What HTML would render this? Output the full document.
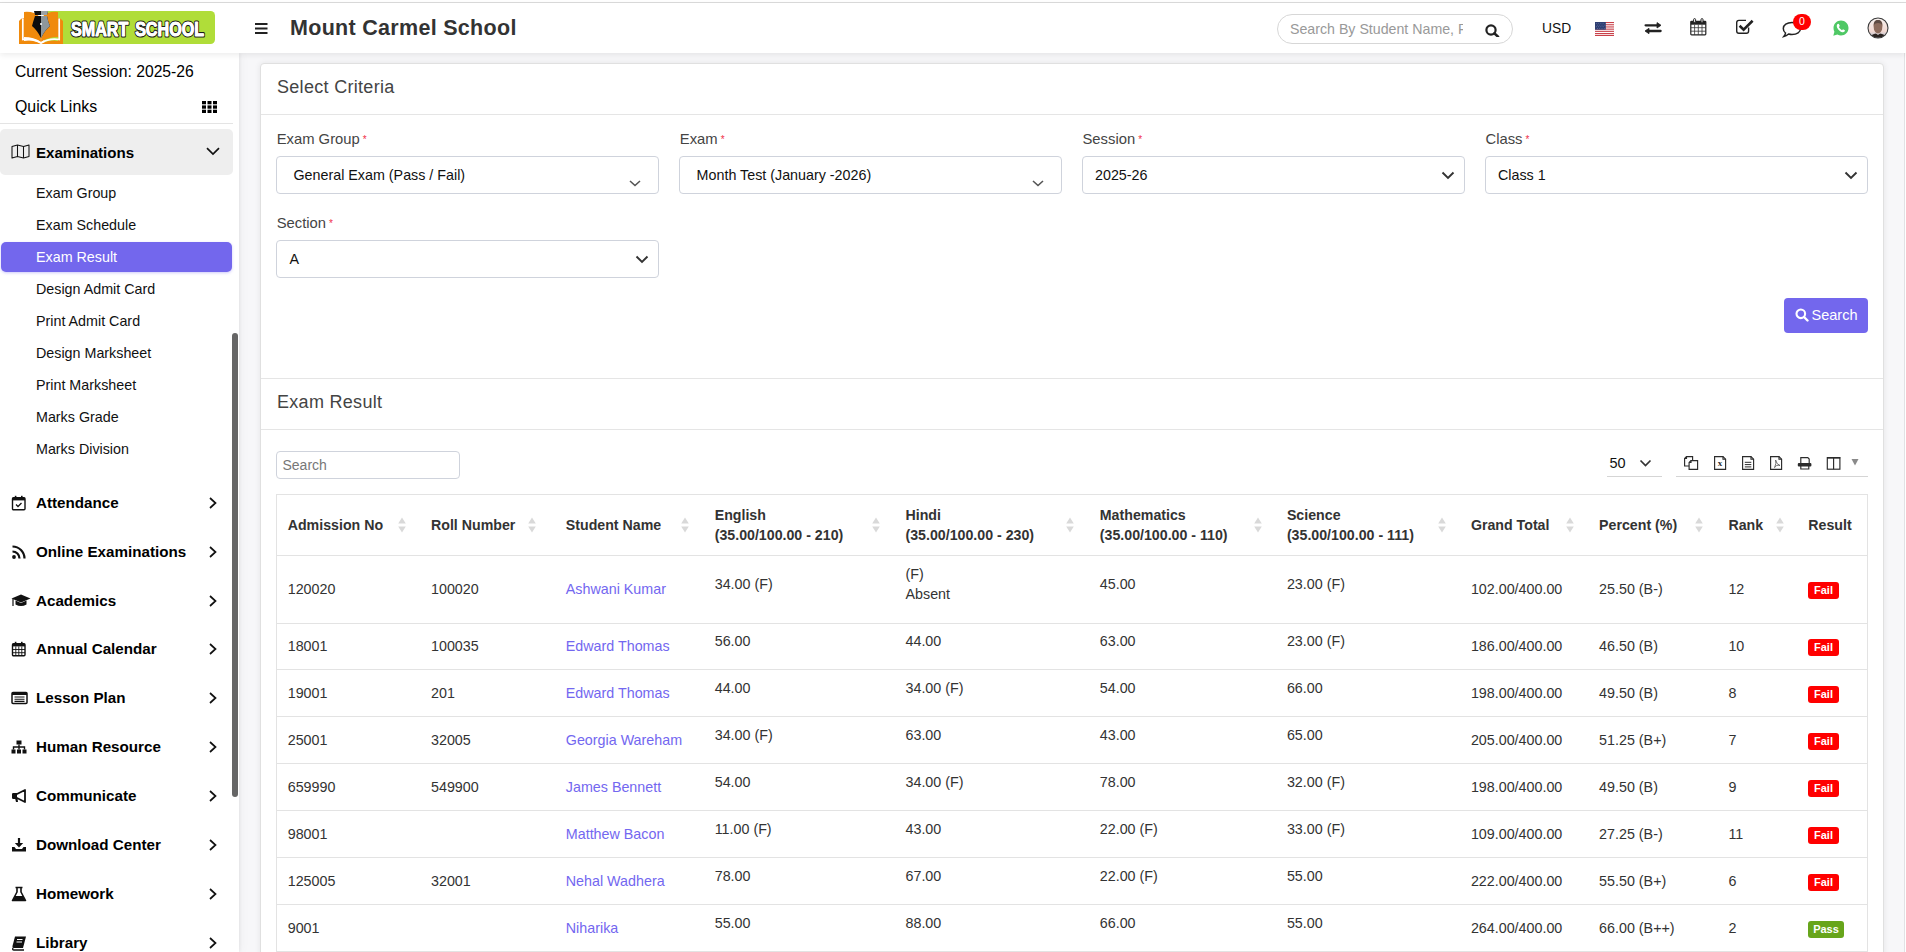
<!DOCTYPE html>
<html><head><meta charset="utf-8">
<style>
*{box-sizing:border-box;margin:0;padding:0}
html,body{width:1906px;height:952px;overflow:hidden;background:#fff;font-family:"Liberation Sans",sans-serif;color:#222}
#topline{position:absolute;left:0;top:2px;width:1906px;height:1px;background:#dcdcdc}
#header{position:absolute;left:0;top:3px;width:1906px;height:50px;background:#fff;z-index:5;box-shadow:0 2px 6px rgba(0,0,0,.08)}
#content{position:absolute;left:239px;top:53px;width:1665px;height:899px;background:#f7f7f9}
#rline{position:absolute;left:1904px;top:53px;width:1px;height:899px;background:#e2e2e4}
#sidebar{position:absolute;left:0;top:53px;width:239px;height:899px;background:#fff;z-index:3;box-shadow:1px 0 3px rgba(0,0,0,.06), 2px 0 10px rgba(0,0,0,.04)}
.abs{position:absolute}
</style></head><body>
<div id="topline"></div>
<div id="header">
<svg class="abs" style="left:0;top:-3px" width="240" height="56" viewBox="0 0 240 56">
 <rect x="44" y="11" width="171" height="33" rx="4.5" fill="#b0dd39"/>
 <path d="M19 21 Q21 18 24 18 L24 41 Q33 39 41 44 L19 44 Z" fill="#f08a0c"/>
 <path d="M63 21 Q61 18 58 18 L58 41 Q49 39 41 44 L63 44 Z" fill="#f08a0c"/>
 <path d="M24 12 Q34 11 40 17 L41 42 Q34 37 24 37 Z" fill="#f08a0c"/>
 <path d="M58 12 Q48 11 42 17 L41 42 Q48 37 58 37 Z" fill="#f08a0c"/>
 <path d="M22.8 18.5 L22.8 39.5 Q33 38 41 43" fill="none" stroke="#fff" stroke-width="1.7"/>
 <path d="M59.2 18.5 L59.2 39.5 Q49 38 41 43" fill="none" stroke="#fff" stroke-width="1.7"/>
 <path d="M34 11 L48 11 L47 15 L35 15 Z" fill="#111"/>
 <path d="M41 11 L48 11 L47 15 L41 15 Z" fill="#9aa3a8"/>
 <path d="M35 16 Q33 22 32 26 Q37 30 41 38 Q45 30 50 26 Q48 22 47 16 Z" fill="#0d0d0d"/>
 <path d="M41 16 L47 16 Q48 22 50 26 Q45 30 41 38 Z" fill="#8d979c"/>
 <circle cx="41" cy="24" r="1" fill="#fff"/>
 <text x="70.8" y="36" font-family="Liberation Sans" font-weight="bold" font-size="20.8" fill="#fff" stroke="#1a1a1a" stroke-width="3.2" stroke-linejoin="round" paint-order="stroke" word-spacing="3" transform="translate(72 0) scale(0.775 1) translate(-72 0)">SMART SCHOOL</text><text x="70.8" y="36" font-family="Liberation Sans" font-weight="bold" font-size="20.8" fill="#fff" stroke="#fff" stroke-width="0.9" stroke-linejoin="round" word-spacing="3" transform="translate(72 0) scale(0.775 1) translate(-72 0)">SMART SCHOOL</text>
</svg>
<svg class="abs" style="left:255px;top:20px" width="13" height="11" viewBox="0 0 13 11"><rect x="0" y="0" width="12.5" height="2" fill="#222"/><rect x="0" y="4.5" width="12.5" height="2" fill="#222"/><rect x="0" y="9" width="12.5" height="2" fill="#222"/></svg>
<div class="abs" id="title" style="left:290px;top:13px;font-size:21.5px;font-weight:bold;letter-spacing:0.3px;color:#333;line-height:24px">Mount Carmel School</div>
<div class="abs" style="left:1277px;top:11px;width:236px;height:30px;border:1px solid #d7d7d7;border-radius:15px"></div>
<div class="abs" style="left:1290px;top:18px;width:173px;overflow:hidden;font-size:14.2px;color:#999;line-height:17px;white-space:nowrap">Search By Student Name, Roll Number</div>
<svg class="abs" style="left:1485px;top:21px" width="15" height="13" viewBox="0 0 15 13"><circle cx="6" cy="6" r="4.6" fill="none" stroke="#222" stroke-width="2.2"/><path d="M9.3 9.3 L13 12.6" stroke="#222" stroke-width="2.6" stroke-linecap="round"/></svg>
<div class="abs" style="left:1542px;top:17px;font-size:13.8px;color:#111;line-height:17px">USD</div>
<svg class="abs" style="left:1595px;top:19px" width="19" height="14" viewBox="0 0 19 14">
 <rect width="19" height="14" fill="#fff"/>
 <rect y="0" width="19" height="1.1" fill="#c9414a"/><rect y="2.2" width="19" height="1.1" fill="#c9414a"/><rect y="4.4" width="19" height="1.1" fill="#c9414a"/><rect y="6.6" width="19" height="1.1" fill="#c9414a"/><rect y="8.8" width="19" height="1.1" fill="#c9414a"/><rect y="11" width="19" height="1.1" fill="#c9414a"/><rect y="12.9" width="19" height="1.1" fill="#c9414a"/>
 <rect width="10.8" height="7.7" fill="#2f3f73"/><g fill="#8e9bc0" opacity="0.8"><circle cx="1.5" cy="1.4" r="0.45"/><circle cx="3.7" cy="1.4" r="0.45"/><circle cx="5.9" cy="1.4" r="0.45"/><circle cx="8.1" cy="1.4" r="0.45"/><circle cx="2.6" cy="3.1" r="0.45"/><circle cx="4.8" cy="3.1" r="0.45"/><circle cx="7" cy="3.1" r="0.45"/><circle cx="9.2" cy="3.1" r="0.45"/><circle cx="1.5" cy="4.8" r="0.45"/><circle cx="3.7" cy="4.8" r="0.45"/><circle cx="5.9" cy="4.8" r="0.45"/><circle cx="8.1" cy="4.8" r="0.45"/><circle cx="2.6" cy="6.5" r="0.45"/><circle cx="4.8" cy="6.5" r="0.45"/><circle cx="7" cy="6.5" r="0.45"/><circle cx="9.2" cy="6.5" r="0.45"/></g>
</svg>
<svg class="abs" style="left:1644px;top:19px" width="18" height="13" viewBox="0 0 18 13"><path d="M1.6 3.3 H14.5" stroke="#222" stroke-width="2.3" stroke-linecap="round"/><path d="M13 0.6 L17 3.3 L13 6 Z" fill="#222" stroke="#222" stroke-width="0.8" stroke-linejoin="round"/><path d="M16.6 9 H3.6" stroke="#222" stroke-width="2.3" stroke-linecap="round"/><path d="M5 6.3 L1 9 L5 11.7 Z" fill="#222" stroke="#222" stroke-width="0.8" stroke-linejoin="round"/></svg>
<svg class="abs" style="left:1690px;top:15px" width="17" height="18" viewBox="0 0 17 18"><rect x="0.8" y="3.3" width="15" height="13.6" rx="0.8" fill="none" stroke="#222" stroke-width="1.2"/><rect x="0.8" y="3.3" width="15" height="3.4" fill="#222"/><rect x="3.6" y="0.6" width="2" height="3.8" rx="1" fill="#fff" stroke="#222" stroke-width="1"/><rect x="11" y="0.6" width="2" height="3.8" rx="1" fill="#fff" stroke="#222" stroke-width="1"/><path d="M0.8 9.7 H15.8 M0.8 13.2 H15.8 M4.6 6.7 V16.9 M8.3 6.7 V16.9 M12 6.7 V16.9" stroke="#333" stroke-width="0.8"/></svg>
<svg class="abs" style="left:1735px;top:14.5px" width="20" height="17" viewBox="0 0 20 17"><path d="M13.6 9.5 V13 Q13.6 15.2 11.4 15.2 H3.9 Q1.7 15.2 1.7 13 V4.6 Q1.7 2.4 3.9 2.4 H11" fill="none" stroke="#222" stroke-width="1.4"/><path d="M4.6 7.8 L8.6 11.6 L17.6 2.8" fill="none" stroke="#222" stroke-width="2.6"/></svg>
<svg class="abs" style="left:1782px;top:17px" width="21" height="18" viewBox="0 0 21 18"><path d="M10 2.5 C15 2.5 18.5 5 18.5 8.5 C18.5 12 15 14.5 10 14.5 C8.8 14.5 7.6 14.3 6.6 14 C5 15.5 3.5 16.3 1.8 16.6 C2.8 15.5 3.4 14.3 3.5 13 C2 12 1.3 10.3 1.3 8.5 C1.3 5 5 2.5 10 2.5 Z" fill="none" stroke="#222" stroke-width="1.5"/></svg>
<div class="abs" style="left:1793px;top:11px;width:18px;height:15.5px;border-radius:8px;background:#f00;color:#fff;font-size:10.5px;line-height:15px;text-align:center">0</div>
<svg class="abs" style="left:1832px;top:16.5px" width="17" height="17" viewBox="0 0 17 17"><path d="M9 0.6 C13.2 0.6 16.5 3.9 16.5 8 C16.5 12.2 13.2 15.5 9 15.5 C7.7 15.5 6.5 15.2 5.4 14.6 L1.3 15.7 L2.4 11.8 C1.8 10.7 1.5 9.4 1.5 8 C1.5 3.9 4.8 0.6 9 0.6 Z" fill="#4fc865"/><path d="M6.2 3.8 C5.4 4 4.6 5 4.8 6.4 C5.2 8.8 7.8 11.6 10.4 12.2 C11.6 12.5 12.6 11.9 12.8 11.1 L12.9 10.3 L11 9.2 L10 10.2 C8.7 9.6 7.5 8.4 6.9 7.1 L7.8 6 L6.9 3.9 Z" fill="#fff"/></svg>
<svg class="abs" style="left:1867px;top:14px" width="22" height="22" viewBox="0 0 22 22"><defs><clipPath id="av"><circle cx="11" cy="11" r="9.8"/></clipPath><linearGradient id="avg" x1="0" y1="0" x2="0" y2="1"><stop offset="0" stop-color="#f7f4f2"/><stop offset="0.65" stop-color="#f3d9d2"/><stop offset="1" stop-color="#9fb6cc"/></linearGradient></defs><g clip-path="url(#av)"><rect width="22" height="22" fill="url(#avg)"/><path d="M6.5 8.5 Q6.5 3 11 3 Q15.5 3 15.5 8.5 L15 12.5 Q14 16 11 16.5 Q8 16 7 12.5 Z" fill="#8d6b5c"/><path d="M6.8 8 Q7 3 11 3 Q15 3 15.2 8 Q14 6 11 6 Q8 6 6.8 8Z" fill="#5d4a42"/><path d="M3 22 Q4 17 9 16.5 L11 18 L13 16.5 Q18 17 20 22 Z" fill="#2b2320"/></g><circle cx="11" cy="11" r="10" fill="none" stroke="#3a3a3a" stroke-width="1.1"/></svg>
</div>
<div id="content"></div>
<div id="rline"></div>
<div id="main" class="abs" style="left:0;top:0;width:1906px;height:952px;z-index:2">
<div class="abs" style="left:260px;top:63px;width:1624px;height:950px;background:#fff;border:1px solid #e0e0e0;border-radius:4px;box-shadow:0 0 6px rgba(0,0,0,.08)"></div>
<div class="abs" style="left:261px;top:114px;width:1622px;height:1px;background:#e5e5e5"></div>
<div class="abs" style="left:261px;top:378px;width:1622px;height:1px;background:#e5e5e5"></div>
<div class="abs" style="left:261px;top:429px;width:1622px;height:1px;background:#e5e5e5"></div>
<div class="abs" style="left:277px;top:77px;font-size:18px;letter-spacing:0.3px;line-height:21px;color:#444">Select Criteria</div>
<div class="abs" style="left:277px;top:392px;font-size:18px;letter-spacing:0.3px;line-height:21px;color:#444">Exam Result</div>
<div class="abs" style="left:276.7px;top:131px;font-size:14.8px;line-height:17px;color:#444;white-space:nowrap">Exam Group<span style="color:#f0304a;font-size:10px;vertical-align:top;position:relative;top:0px;margin-left:3px">*</span></div>
<div class="abs" style="left:679.8px;top:131px;font-size:14.8px;line-height:17px;color:#444;white-space:nowrap">Exam<span style="color:#f0304a;font-size:10px;vertical-align:top;position:relative;top:0px;margin-left:3px">*</span></div>
<div class="abs" style="left:1082.5px;top:131px;font-size:14.8px;line-height:17px;color:#444;white-space:nowrap">Session<span style="color:#f0304a;font-size:10px;vertical-align:top;position:relative;top:0px;margin-left:3px">*</span></div>
<div class="abs" style="left:1485.5px;top:131px;font-size:14.8px;line-height:17px;color:#444;white-space:nowrap">Class<span style="color:#f0304a;font-size:10px;vertical-align:top;position:relative;top:0px;margin-left:3px">*</span></div>
<div class="abs" style="left:276.7px;top:215px;font-size:14.8px;line-height:17px;color:#444;white-space:nowrap">Section<span style="color:#f0304a;font-size:10px;vertical-align:top;position:relative;top:0px;margin-left:3px">*</span></div>
<div class="abs" style="left:276px;top:156px;width:383px;height:38px;border:1px solid #cfd3dc;border-radius:4px"></div>
<div class="abs" style="left:679px;top:156px;width:383px;height:38px;border:1px solid #cfd3dc;border-radius:4px"></div>
<div class="abs" style="left:1082px;top:156px;width:383px;height:38px;border:1px solid #cfd3dc;border-radius:4px"></div>
<div class="abs" style="left:1485px;top:156px;width:383px;height:38px;border:1px solid #cfd3dc;border-radius:4px"></div>
<div class="abs" style="left:276px;top:240px;width:383px;height:38px;border:1px solid #cfd3dc;border-radius:4px"></div>
<div class="abs" style="left:293.5px;top:166.5px;font-size:14.3px;line-height:17px;color:#111;white-space:nowrap">General Exam (Pass / Fail)</div>
<div class="abs" style="left:696.6px;top:166.5px;font-size:14.3px;line-height:17px;color:#111;white-space:nowrap">Month Test (January -2026)</div>
<div class="abs" style="left:1095.0px;top:166.5px;font-size:14.3px;line-height:17px;color:#111;white-space:nowrap">2025-26</div>
<div class="abs" style="left:1498.0px;top:166.5px;font-size:14.3px;line-height:17px;color:#111;white-space:nowrap">Class 1</div>
<div class="abs" style="left:289.6px;top:250.5px;font-size:14.3px;line-height:17px;color:#111;white-space:nowrap">A</div>
<svg class="abs" style="left:628.5px;top:180.0px" width="12" height="7" viewBox="0 0 12 7"><path d="M1 1 L6 5.5 L11 1" fill="none" stroke="#555" stroke-width="1.6"/></svg>
<svg class="abs" style="left:1031.5px;top:180.0px" width="12" height="7" viewBox="0 0 12 7"><path d="M1 1 L6 5.5 L11 1" fill="none" stroke="#555" stroke-width="1.6"/></svg>
<svg class="abs" style="left:1440.5px;top:170.5px" width="14" height="9" viewBox="0 0 14 9"><path d="M1.5 1.5 L7 7 L12.5 1.5" fill="none" stroke="#333" stroke-width="1.9"/></svg>
<svg class="abs" style="left:1843.5px;top:170.5px" width="14" height="9" viewBox="0 0 14 9"><path d="M1.5 1.5 L7 7 L12.5 1.5" fill="none" stroke="#333" stroke-width="1.9"/></svg>
<svg class="abs" style="left:634.5px;top:254.5px" width="14" height="9" viewBox="0 0 14 9"><path d="M1.5 1.5 L7 7 L12.5 1.5" fill="none" stroke="#333" stroke-width="1.9"/></svg>
<div class="abs" style="left:1784px;top:298px;width:84px;height:35px;background:#7367ed;border-radius:4px"></div>
<svg class="abs" style="left:1795px;top:308px" width="14" height="14" viewBox="0 0 14 14"><circle cx="5.8" cy="5.8" r="4.3" fill="none" stroke="#fff" stroke-width="2.1"/><path d="M9 9 L12.5 12.5" stroke="#fff" stroke-width="2.4" stroke-linecap="round"/></svg>
<div class="abs" style="left:1811.5px;top:306.5px;font-size:14.5px;line-height:17px;color:#fff">Search</div>
<div class="abs" style="left:276px;top:451px;width:184px;height:28px;border:1px solid #cfd3dc;border-radius:4px"></div>
<div class="abs" style="left:282.5px;top:456.5px;font-size:14px;line-height:17px;color:#777">Search</div>
<div class="abs" style="left:1609.5px;top:454.5px;font-size:14.5px;line-height:17px;color:#111">50</div>
<svg class="abs" style="left:1639px;top:459px" width="13" height="9" viewBox="0 0 13 9"><path d="M1.5 1.5 L6.5 6.5 L11.5 1.5" fill="none" stroke="#333" stroke-width="1.7"/></svg>
<div class="abs" style="left:1607px;top:476px;width:55px;height:1px;background:#d5d5d5"></div>
<div class="abs" style="left:1676px;top:476px;width:192px;height:1px;background:#d5d5d5"></div>
<svg class="abs" style="left:1680px;top:452px" width="185" height="22" viewBox="1680 452 185 22"><path d="M1686.5 456.6 H1692.6 V466 H1684.6 V458.5 Z" fill="none" stroke="#2b2b2b" stroke-width="1.15" stroke-linejoin="miter"/><path d="M1686.5 456.6 V458.5 H1684.6" fill="none" stroke="#2b2b2b" stroke-width="1.15" stroke-linejoin="miter"/><path d="M1691 460.6 H1697.6 V469.4 H1689.1 V462.5 Z" fill="#fff" stroke="#2b2b2b" stroke-width="1.15"/><path d="M1691 460.6 V462.5 H1689.1" fill="none" stroke="#2b2b2b" stroke-width="1.15" stroke-linejoin="miter"/><path d="M1714.6 456.6 H1723 L1725.6 459.2 V469.4 H1714.6 Z" fill="none" stroke="#2b2b2b" stroke-width="1.15" stroke-linejoin="miter"/><path d="M1723 456.6 V459.2 H1725.6" fill="none" stroke="#2b2b2b" stroke-width="1.15" stroke-linejoin="miter"/><text x="1720" y="466.4" font-family="Liberation Serif" font-weight="bold" font-size="9" fill="#2b2b2b" text-anchor="middle">x</text><path d="M1742.6 456.6 H1751 L1753.6 459.2 V469.4 H1742.6 Z" fill="none" stroke="#2b2b2b" stroke-width="1.15" stroke-linejoin="miter"/><path d="M1751 456.6 V459.2 H1753.6" fill="none" stroke="#2b2b2b" stroke-width="1.15" stroke-linejoin="miter"/><path d="M1744.8 462.3 H1751.3 M1744.8 464.6 H1751.3 M1744.8 466.9 H1751.3" stroke="#2b2b2b" stroke-width="1"/><path d="M1770.6 456.6 H1779 L1781.6 459.2 V469.4 H1770.6 Z" fill="none" stroke="#2b2b2b" stroke-width="1.15" stroke-linejoin="miter"/><path d="M1779 456.6 V459.2 H1781.6" fill="none" stroke="#2b2b2b" stroke-width="1.15" stroke-linejoin="miter"/><path d="M1775.6 460 Q1776.6 463 1774.6 467.6 Q1776 464.5 1780 465.5 Q1776.6 464.5 1775.6 460" fill="none" stroke="#555" stroke-width="0.8"/><path d="M1800.8 463 V457.6 H1807.8 L1809.2 459 V463" fill="none" stroke="#2b2b2b" stroke-width="1.15" stroke-linejoin="miter"/><rect x="1797.8" y="463" width="13.6" height="3.6" rx="1" fill="#2b2b2b"/><path d="M1800.8 465.5 V469 H1808.8 V465.5" fill="none" stroke="#2b2b2b" stroke-width="1.15" stroke-linejoin="miter"/><rect x="1827.3" y="457.6" width="12.6" height="11.6" fill="none" stroke="#2b2b2b" stroke-width="1.15" stroke-linejoin="miter"/><rect x="1827" y="457" width="13.2" height="1.6" fill="#2b2b2b"/><path d="M1833.6 457.6 V469.2" fill="none" stroke="#2b2b2b" stroke-width="1.15" stroke-linejoin="miter"/><path d="M1851.5 459 H1858.5 L1855 465.5 Z" fill="#8a8a8a"/></svg>
<div class="abs" style="left:276px;top:494px;width:592px;height:0"></div>
<div class="abs" style="left:276px;top:494px;width:1592px;height:1px;background:#e3e3e3"></div>
<div class="abs" style="left:276px;top:555px;width:1592px;height:1px;background:#e3e3e3"></div>
<div class="abs" style="left:276px;top:623px;width:1592px;height:1px;background:#e3e3e3"></div>
<div class="abs" style="left:276px;top:669px;width:1592px;height:1px;background:#e3e3e3"></div>
<div class="abs" style="left:276px;top:716px;width:1592px;height:1px;background:#e3e3e3"></div>
<div class="abs" style="left:276px;top:763px;width:1592px;height:1px;background:#e3e3e3"></div>
<div class="abs" style="left:276px;top:810px;width:1592px;height:1px;background:#e3e3e3"></div>
<div class="abs" style="left:276px;top:857px;width:1592px;height:1px;background:#e3e3e3"></div>
<div class="abs" style="left:276px;top:904px;width:1592px;height:1px;background:#e3e3e3"></div>
<div class="abs" style="left:276px;top:951px;width:1592px;height:1px;background:#e3e3e3"></div>
<div class="abs" style="left:276px;top:494px;width:1px;height:470px;background:#e3e3e3"></div>
<div class="abs" style="left:1867px;top:494px;width:1px;height:470px;background:#e3e3e3"></div>
<div class="abs" style="left:287.7px;top:514.7px;font-size:14.2px;font-weight:bold;line-height:20px;color:#333;white-space:nowrap">Admission No</div>
<svg class="abs" style="left:397.5px;top:517px" width="8" height="16" viewBox="0 0 8 16"><path d="M4 0.5 L7.8 6.5 H0.2 Z M4 15.5 L7.8 9.5 H0.2 Z" fill="#d9d9d9"/></svg>
<div class="abs" style="left:431.0px;top:514.7px;font-size:14.2px;font-weight:bold;line-height:20px;color:#333;white-space:nowrap">Roll Number</div>
<svg class="abs" style="left:527.5px;top:517px" width="8" height="16" viewBox="0 0 8 16"><path d="M4 0.5 L7.8 6.5 H0.2 Z M4 15.5 L7.8 9.5 H0.2 Z" fill="#d9d9d9"/></svg>
<div class="abs" style="left:565.8px;top:514.7px;font-size:14.2px;font-weight:bold;line-height:20px;color:#333;white-space:nowrap">Student Name</div>
<svg class="abs" style="left:680.5px;top:517px" width="8" height="16" viewBox="0 0 8 16"><path d="M4 0.5 L7.8 6.5 H0.2 Z M4 15.5 L7.8 9.5 H0.2 Z" fill="#d9d9d9"/></svg>
<div class="abs" style="left:714.7px;top:504.5px;font-size:14.2px;font-weight:bold;line-height:20px;color:#333;white-space:nowrap">English<br>(35.00/100.00 - 210)</div>
<svg class="abs" style="left:872.4px;top:517px" width="8" height="16" viewBox="0 0 8 16"><path d="M4 0.5 L7.8 6.5 H0.2 Z M4 15.5 L7.8 9.5 H0.2 Z" fill="#d9d9d9"/></svg>
<div class="abs" style="left:905.5px;top:504.5px;font-size:14.2px;font-weight:bold;line-height:20px;color:#333;white-space:nowrap">Hindi<br>(35.00/100.00 - 230)</div>
<svg class="abs" style="left:1066.4px;top:517px" width="8" height="16" viewBox="0 0 8 16"><path d="M4 0.5 L7.8 6.5 H0.2 Z M4 15.5 L7.8 9.5 H0.2 Z" fill="#d9d9d9"/></svg>
<div class="abs" style="left:1099.8px;top:504.5px;font-size:14.2px;font-weight:bold;line-height:20px;color:#333;white-space:nowrap">Mathematics<br>(35.00/100.00 - 110)</div>
<svg class="abs" style="left:1254.2px;top:517px" width="8" height="16" viewBox="0 0 8 16"><path d="M4 0.5 L7.8 6.5 H0.2 Z M4 15.5 L7.8 9.5 H0.2 Z" fill="#d9d9d9"/></svg>
<div class="abs" style="left:1286.9px;top:504.5px;font-size:14.2px;font-weight:bold;line-height:20px;color:#333;white-space:nowrap">Science<br>(35.00/100.00 - 111)</div>
<svg class="abs" style="left:1438.1px;top:517px" width="8" height="16" viewBox="0 0 8 16"><path d="M4 0.5 L7.8 6.5 H0.2 Z M4 15.5 L7.8 9.5 H0.2 Z" fill="#d9d9d9"/></svg>
<div class="abs" style="left:1470.9px;top:514.7px;font-size:14.2px;font-weight:bold;line-height:20px;color:#333;white-space:nowrap">Grand Total</div>
<svg class="abs" style="left:1566.4px;top:517px" width="8" height="16" viewBox="0 0 8 16"><path d="M4 0.5 L7.8 6.5 H0.2 Z M4 15.5 L7.8 9.5 H0.2 Z" fill="#d9d9d9"/></svg>
<div class="abs" style="left:1599.1px;top:514.7px;font-size:14.2px;font-weight:bold;line-height:20px;color:#333;white-space:nowrap">Percent (%)</div>
<svg class="abs" style="left:1694.7px;top:517px" width="8" height="16" viewBox="0 0 8 16"><path d="M4 0.5 L7.8 6.5 H0.2 Z M4 15.5 L7.8 9.5 H0.2 Z" fill="#d9d9d9"/></svg>
<div class="abs" style="left:1728.4px;top:514.7px;font-size:14.2px;font-weight:bold;line-height:20px;color:#333;white-space:nowrap">Rank</div>
<svg class="abs" style="left:1775.6px;top:517px" width="8" height="16" viewBox="0 0 8 16"><path d="M4 0.5 L7.8 6.5 H0.2 Z M4 15.5 L7.8 9.5 H0.2 Z" fill="#d9d9d9"/></svg>
<div class="abs" style="left:1808.3px;top:514.7px;font-size:14.2px;font-weight:bold;line-height:20px;color:#333;white-space:nowrap">Result</div>
<div class="abs" style="left:287.7px;top:581.2px;font-size:14.3px;line-height:17px;color:#333;white-space:nowrap">120020</div>
<div class="abs" style="left:431.0px;top:581.2px;font-size:14.3px;line-height:17px;color:#333;white-space:nowrap">100020</div>
<div class="abs" style="left:565.8px;top:581.2px;font-size:14.3px;line-height:17px;color:#7367f0;white-space:nowrap">Ashwani Kumar</div>
<div class="abs" style="left:714.7px;top:576.4px;font-size:14.3px;line-height:17px;color:#333;white-space:nowrap">34.00 (F)</div>
<div class="abs" style="left:905.5px;top:564.3px;font-size:14.3px;line-height:20px;color:#333;white-space:nowrap">(F)<br>Absent</div>
<div class="abs" style="left:1099.8px;top:576.4px;font-size:14.3px;line-height:17px;color:#333;white-space:nowrap">45.00</div>
<div class="abs" style="left:1286.9px;top:576.4px;font-size:14.3px;line-height:17px;color:#333;white-space:nowrap">23.00 (F)</div>
<div class="abs" style="left:1470.9px;top:581.2px;font-size:14.3px;line-height:17px;color:#333;white-space:nowrap">102.00/400.00</div>
<div class="abs" style="left:1599.1px;top:581.2px;font-size:14.3px;line-height:17px;color:#333;white-space:nowrap">25.50 (B-)</div>
<div class="abs" style="left:1728.4px;top:581.2px;font-size:14.3px;line-height:17px;color:#333;white-space:nowrap">12</div>
<div class="abs" style="left:1808px;top:582.1px;width:31px;height:17px;background:#f00;border-radius:3px;color:#fff;font-size:11px;font-weight:bold;line-height:17px;text-align:center">Fail</div>
<div class="abs" style="left:287.7px;top:638.3px;font-size:14.3px;line-height:17px;color:#333;white-space:nowrap">18001</div>
<div class="abs" style="left:431.0px;top:638.3px;font-size:14.3px;line-height:17px;color:#333;white-space:nowrap">100035</div>
<div class="abs" style="left:565.8px;top:638.3px;font-size:14.3px;line-height:17px;color:#7367f0;white-space:nowrap">Edward Thomas</div>
<div class="abs" style="left:714.7px;top:633.3px;font-size:14.3px;line-height:17px;color:#333;white-space:nowrap">56.00</div>
<div class="abs" style="left:905.5px;top:633.3px;font-size:14.3px;line-height:17px;color:#333;white-space:nowrap">44.00</div>
<div class="abs" style="left:1099.8px;top:633.3px;font-size:14.3px;line-height:17px;color:#333;white-space:nowrap">63.00</div>
<div class="abs" style="left:1286.9px;top:633.3px;font-size:14.3px;line-height:17px;color:#333;white-space:nowrap">23.00 (F)</div>
<div class="abs" style="left:1470.9px;top:638.3px;font-size:14.3px;line-height:17px;color:#333;white-space:nowrap">186.00/400.00</div>
<div class="abs" style="left:1599.1px;top:638.3px;font-size:14.3px;line-height:17px;color:#333;white-space:nowrap">46.50 (B)</div>
<div class="abs" style="left:1728.4px;top:638.3px;font-size:14.3px;line-height:17px;color:#333;white-space:nowrap">10</div>
<div class="abs" style="left:1808px;top:639.2px;width:31px;height:17px;background:#f00;border-radius:3px;color:#fff;font-size:11px;font-weight:bold;line-height:17px;text-align:center">Fail</div>
<div class="abs" style="left:287.7px;top:685.1px;font-size:14.3px;line-height:17px;color:#333;white-space:nowrap">19001</div>
<div class="abs" style="left:431.0px;top:685.1px;font-size:14.3px;line-height:17px;color:#333;white-space:nowrap">201</div>
<div class="abs" style="left:565.8px;top:685.1px;font-size:14.3px;line-height:17px;color:#7367f0;white-space:nowrap">Edward Thomas</div>
<div class="abs" style="left:714.7px;top:680.1px;font-size:14.3px;line-height:17px;color:#333;white-space:nowrap">44.00</div>
<div class="abs" style="left:905.5px;top:680.1px;font-size:14.3px;line-height:17px;color:#333;white-space:nowrap">34.00 (F)</div>
<div class="abs" style="left:1099.8px;top:680.1px;font-size:14.3px;line-height:17px;color:#333;white-space:nowrap">54.00</div>
<div class="abs" style="left:1286.9px;top:680.1px;font-size:14.3px;line-height:17px;color:#333;white-space:nowrap">66.00</div>
<div class="abs" style="left:1470.9px;top:685.1px;font-size:14.3px;line-height:17px;color:#333;white-space:nowrap">198.00/400.00</div>
<div class="abs" style="left:1599.1px;top:685.1px;font-size:14.3px;line-height:17px;color:#333;white-space:nowrap">49.50 (B)</div>
<div class="abs" style="left:1728.4px;top:685.1px;font-size:14.3px;line-height:17px;color:#333;white-space:nowrap">8</div>
<div class="abs" style="left:1808px;top:686.0px;width:31px;height:17px;background:#f00;border-radius:3px;color:#fff;font-size:11px;font-weight:bold;line-height:17px;text-align:center">Fail</div>
<div class="abs" style="left:287.7px;top:732.2px;font-size:14.3px;line-height:17px;color:#333;white-space:nowrap">25001</div>
<div class="abs" style="left:431.0px;top:732.2px;font-size:14.3px;line-height:17px;color:#333;white-space:nowrap">32005</div>
<div class="abs" style="left:565.8px;top:732.2px;font-size:14.3px;line-height:17px;color:#7367f0;white-space:nowrap">Georgia Wareham</div>
<div class="abs" style="left:714.7px;top:727.2px;font-size:14.3px;line-height:17px;color:#333;white-space:nowrap">34.00 (F)</div>
<div class="abs" style="left:905.5px;top:727.2px;font-size:14.3px;line-height:17px;color:#333;white-space:nowrap">63.00</div>
<div class="abs" style="left:1099.8px;top:727.2px;font-size:14.3px;line-height:17px;color:#333;white-space:nowrap">43.00</div>
<div class="abs" style="left:1286.9px;top:727.2px;font-size:14.3px;line-height:17px;color:#333;white-space:nowrap">65.00</div>
<div class="abs" style="left:1470.9px;top:732.2px;font-size:14.3px;line-height:17px;color:#333;white-space:nowrap">205.00/400.00</div>
<div class="abs" style="left:1599.1px;top:732.2px;font-size:14.3px;line-height:17px;color:#333;white-space:nowrap">51.25 (B+)</div>
<div class="abs" style="left:1728.4px;top:732.2px;font-size:14.3px;line-height:17px;color:#333;white-space:nowrap">7</div>
<div class="abs" style="left:1808px;top:733.1px;width:31px;height:17px;background:#f00;border-radius:3px;color:#fff;font-size:11px;font-weight:bold;line-height:17px;text-align:center">Fail</div>
<div class="abs" style="left:287.7px;top:779.2px;font-size:14.3px;line-height:17px;color:#333;white-space:nowrap">659990</div>
<div class="abs" style="left:431.0px;top:779.2px;font-size:14.3px;line-height:17px;color:#333;white-space:nowrap">549900</div>
<div class="abs" style="left:565.8px;top:779.2px;font-size:14.3px;line-height:17px;color:#7367f0;white-space:nowrap">James Bennett</div>
<div class="abs" style="left:714.7px;top:774.2px;font-size:14.3px;line-height:17px;color:#333;white-space:nowrap">54.00</div>
<div class="abs" style="left:905.5px;top:774.2px;font-size:14.3px;line-height:17px;color:#333;white-space:nowrap">34.00 (F)</div>
<div class="abs" style="left:1099.8px;top:774.2px;font-size:14.3px;line-height:17px;color:#333;white-space:nowrap">78.00</div>
<div class="abs" style="left:1286.9px;top:774.2px;font-size:14.3px;line-height:17px;color:#333;white-space:nowrap">32.00 (F)</div>
<div class="abs" style="left:1470.9px;top:779.2px;font-size:14.3px;line-height:17px;color:#333;white-space:nowrap">198.00/400.00</div>
<div class="abs" style="left:1599.1px;top:779.2px;font-size:14.3px;line-height:17px;color:#333;white-space:nowrap">49.50 (B)</div>
<div class="abs" style="left:1728.4px;top:779.2px;font-size:14.3px;line-height:17px;color:#333;white-space:nowrap">9</div>
<div class="abs" style="left:1808px;top:780.1px;width:31px;height:17px;background:#f00;border-radius:3px;color:#fff;font-size:11px;font-weight:bold;line-height:17px;text-align:center">Fail</div>
<div class="abs" style="left:287.7px;top:826.1px;font-size:14.3px;line-height:17px;color:#333;white-space:nowrap">98001</div>
<div class="abs" style="left:565.8px;top:826.1px;font-size:14.3px;line-height:17px;color:#7367f0;white-space:nowrap">Matthew Bacon</div>
<div class="abs" style="left:714.7px;top:821.1px;font-size:14.3px;line-height:17px;color:#333;white-space:nowrap">11.00 (F)</div>
<div class="abs" style="left:905.5px;top:821.1px;font-size:14.3px;line-height:17px;color:#333;white-space:nowrap">43.00</div>
<div class="abs" style="left:1099.8px;top:821.1px;font-size:14.3px;line-height:17px;color:#333;white-space:nowrap">22.00 (F)</div>
<div class="abs" style="left:1286.9px;top:821.1px;font-size:14.3px;line-height:17px;color:#333;white-space:nowrap">33.00 (F)</div>
<div class="abs" style="left:1470.9px;top:826.1px;font-size:14.3px;line-height:17px;color:#333;white-space:nowrap">109.00/400.00</div>
<div class="abs" style="left:1599.1px;top:826.1px;font-size:14.3px;line-height:17px;color:#333;white-space:nowrap">27.25 (B-)</div>
<div class="abs" style="left:1728.4px;top:826.1px;font-size:14.3px;line-height:17px;color:#333;white-space:nowrap">11</div>
<div class="abs" style="left:1808px;top:827.0px;width:31px;height:17px;background:#f00;border-radius:3px;color:#fff;font-size:11px;font-weight:bold;line-height:17px;text-align:center">Fail</div>
<div class="abs" style="left:287.7px;top:872.9px;font-size:14.3px;line-height:17px;color:#333;white-space:nowrap">125005</div>
<div class="abs" style="left:431.0px;top:872.9px;font-size:14.3px;line-height:17px;color:#333;white-space:nowrap">32001</div>
<div class="abs" style="left:565.8px;top:872.9px;font-size:14.3px;line-height:17px;color:#7367f0;white-space:nowrap">Nehal Wadhera</div>
<div class="abs" style="left:714.7px;top:867.9px;font-size:14.3px;line-height:17px;color:#333;white-space:nowrap">78.00</div>
<div class="abs" style="left:905.5px;top:867.9px;font-size:14.3px;line-height:17px;color:#333;white-space:nowrap">67.00</div>
<div class="abs" style="left:1099.8px;top:867.9px;font-size:14.3px;line-height:17px;color:#333;white-space:nowrap">22.00 (F)</div>
<div class="abs" style="left:1286.9px;top:867.9px;font-size:14.3px;line-height:17px;color:#333;white-space:nowrap">55.00</div>
<div class="abs" style="left:1470.9px;top:872.9px;font-size:14.3px;line-height:17px;color:#333;white-space:nowrap">222.00/400.00</div>
<div class="abs" style="left:1599.1px;top:872.9px;font-size:14.3px;line-height:17px;color:#333;white-space:nowrap">55.50 (B+)</div>
<div class="abs" style="left:1728.4px;top:872.9px;font-size:14.3px;line-height:17px;color:#333;white-space:nowrap">6</div>
<div class="abs" style="left:1808px;top:873.8px;width:31px;height:17px;background:#f00;border-radius:3px;color:#fff;font-size:11px;font-weight:bold;line-height:17px;text-align:center">Fail</div>
<div class="abs" style="left:287.7px;top:919.9px;font-size:14.3px;line-height:17px;color:#333;white-space:nowrap">9001</div>
<div class="abs" style="left:565.8px;top:919.9px;font-size:14.3px;line-height:17px;color:#7367f0;white-space:nowrap">Niharika</div>
<div class="abs" style="left:714.7px;top:914.9px;font-size:14.3px;line-height:17px;color:#333;white-space:nowrap">55.00</div>
<div class="abs" style="left:905.5px;top:914.9px;font-size:14.3px;line-height:17px;color:#333;white-space:nowrap">88.00</div>
<div class="abs" style="left:1099.8px;top:914.9px;font-size:14.3px;line-height:17px;color:#333;white-space:nowrap">66.00</div>
<div class="abs" style="left:1286.9px;top:914.9px;font-size:14.3px;line-height:17px;color:#333;white-space:nowrap">55.00</div>
<div class="abs" style="left:1470.9px;top:919.9px;font-size:14.3px;line-height:17px;color:#333;white-space:nowrap">264.00/400.00</div>
<div class="abs" style="left:1599.1px;top:919.9px;font-size:14.3px;line-height:17px;color:#333;white-space:nowrap">66.00 (B++)</div>
<div class="abs" style="left:1728.4px;top:919.9px;font-size:14.3px;line-height:17px;color:#333;white-space:nowrap">2</div>
<div class="abs" style="left:1808px;top:920.8px;width:36px;height:17px;background:#67a51b;border-radius:3px;color:#fff;font-size:11px;font-weight:bold;line-height:17px;text-align:center">Pass</div>
</div>
<div id="sidebar">
<div class="abs" style="left:15px;top:10px;font-size:15.7px;line-height:18px;color:#000;white-space:nowrap">Current Session: 2025-26</div>
<div class="abs" style="left:15px;top:45px;font-size:15.9px;line-height:18px;color:#000">Quick Links</div>
<svg class="abs" style="left:202px;top:48px" width="15" height="12" viewBox="0 0 15 12"><g fill="#000"><rect x="0" y="0" width="4" height="3.3"/><rect x="5.5" y="0" width="4" height="3.3"/><rect x="11" y="0" width="4" height="3.3"/><rect x="0" y="4.4" width="4" height="3.3"/><rect x="5.5" y="4.4" width="4" height="3.3"/><rect x="11" y="4.4" width="4" height="3.3"/><rect x="0" y="8.7" width="4" height="3.3"/><rect x="5.5" y="8.7" width="4" height="3.3"/><rect x="11" y="8.7" width="4" height="3.3"/></g></svg>
<div class="abs" style="left:0;top:70px;width:233px;height:1px;background:#e4e4e4"></div>
<div class="abs" style="left:0;top:76px;width:233px;height:46px;background:#eeeeee;border-radius:5px"></div>
<svg class="abs" style="left:11px;top:91px" width="19" height="15" viewBox="0 0 19 15"><path d="M1 2.5 L6.5 1 L12.5 2.5 L18 1 V12.5 L12.5 14 L6.5 12.5 L1 14 Z M6.5 1 V12.5 M12.5 2.5 V14" fill="none" stroke="#111" stroke-width="1.05" stroke-linejoin="round"/></svg>
<div class="abs" style="left:36px;top:91px;font-size:15.1px;font-weight:bold;line-height:18px;color:#000">Examinations</div>
<svg class="abs" style="left:206px;top:94px" width="14" height="9" viewBox="0 0 14 9"><path d="M1 1.2 L7 7 L13 1.2" fill="none" stroke="#111" stroke-width="1.7"/></svg>
<div class="abs" style="left:36px;top:132.3px;font-size:14.3px;line-height:17px;color:#111;white-space:nowrap">Exam Group</div>
<div class="abs" style="left:36px;top:164.3px;font-size:14.3px;line-height:17px;color:#111;white-space:nowrap">Exam Schedule</div>
<div class="abs" style="left:1px;top:189px;width:231px;height:30px;background:#7367ed;border-radius:5px;box-shadow:0 1px 3px rgba(115,103,240,.35)"></div>
<div class="abs" style="left:36px;top:196.3px;font-size:14.3px;line-height:17px;color:#fff;white-space:nowrap">Exam Result</div>
<div class="abs" style="left:36px;top:228.3px;font-size:14.3px;line-height:17px;color:#111;white-space:nowrap">Design Admit Card</div>
<div class="abs" style="left:36px;top:260.3px;font-size:14.3px;line-height:17px;color:#111;white-space:nowrap">Print Admit Card</div>
<div class="abs" style="left:36px;top:292.3px;font-size:14.3px;line-height:17px;color:#111;white-space:nowrap">Design Marksheet</div>
<div class="abs" style="left:36px;top:324.3px;font-size:14.3px;line-height:17px;color:#111;white-space:nowrap">Print Marksheet</div>
<div class="abs" style="left:36px;top:356.3px;font-size:14.3px;line-height:17px;color:#111;white-space:nowrap">Marks Grade</div>
<div class="abs" style="left:36px;top:388.3px;font-size:14.3px;line-height:17px;color:#111;white-space:nowrap">Marks Division</div>
<svg class="abs" style="left:11px;top:441.6px" width="16" height="16" viewBox="0 0 16 16"><rect x="1.5" y="2.8" width="12.5" height="12" rx="1" fill="none" stroke="#111" stroke-width="1.4"/><rect x="1.5" y="2.8" width="12.5" height="2.6" fill="#111"/><rect x="3.8" y="0.8" width="1.6" height="3" fill="#111"/><rect x="10" y="0.8" width="1.6" height="3" fill="#111"/><path d="M5 9.5 L7 11.5 L10.5 8" fill="none" stroke="#111" stroke-width="1.3"/></svg>
<div class="abs" style="left:36px;top:440.6px;font-size:15.2px;font-weight:bold;line-height:18px;color:#000;white-space:nowrap">Attendance</div>
<svg class="abs" style="left:209px;top:443.6px" width="8" height="12" viewBox="0 0 8 12"><path d="M1 1 L6.5 6 L1 11" fill="none" stroke="#111" stroke-width="1.7"/></svg>
<svg class="abs" style="left:11px;top:490.5px" width="16" height="16" viewBox="0 0 16 16"><circle cx="3" cy="13" r="1.9" fill="#111"/><path d="M1.5 7.5 A7 7 0 0 1 8.5 14.5" fill="none" stroke="#111" stroke-width="2.2"/><path d="M1.5 2.5 A12 12 0 0 1 13.5 14.5" fill="none" stroke="#111" stroke-width="2.2"/></svg>
<div class="abs" style="left:36px;top:489.5px;font-size:15.2px;font-weight:bold;line-height:18px;color:#000;white-space:nowrap">Online Examinations</div>
<svg class="abs" style="left:209px;top:492.5px" width="8" height="12" viewBox="0 0 8 12"><path d="M1 1 L6.5 6 L1 11" fill="none" stroke="#111" stroke-width="1.7"/></svg>
<svg class="abs" style="left:11px;top:539.5px" width="20" height="16" viewBox="0 0 20 16"><path d="M10 1.5 L19.5 5.5 L10 9.5 L0.5 5.5 Z" fill="#111"/><path d="M4.5 7.5 L4.5 11.5 Q10 14.5 15.5 11.5 L15.5 7.5 L10 10 Z" fill="#111"/><path d="M2 6 L2 13" stroke="#111" stroke-width="1.2"/></svg>
<div class="abs" style="left:36px;top:538.5px;font-size:15.2px;font-weight:bold;line-height:18px;color:#000;white-space:nowrap">Academics</div>
<svg class="abs" style="left:209px;top:541.5px" width="8" height="12" viewBox="0 0 8 12"><path d="M1 1 L6.5 6 L1 11" fill="none" stroke="#111" stroke-width="1.7"/></svg>
<svg class="abs" style="left:11px;top:588.4px" width="16" height="16" viewBox="0 0 16 16"><rect x="1.5" y="2.8" width="12.5" height="12" rx="1" fill="none" stroke="#111" stroke-width="1.4"/><rect x="1.5" y="2.8" width="12.5" height="2.6" fill="#111"/><rect x="3.8" y="0.8" width="1.6" height="3" fill="#111"/><rect x="10" y="0.8" width="1.6" height="3" fill="#111"/><path d="M1.5 8.5 H14 M1.5 11.7 H14 M4.8 5.4 V14.8 M7.8 5.4 V14.8 M10.8 5.4 V14.8" stroke="#111" stroke-width="0.9"/></svg>
<div class="abs" style="left:36px;top:587.4px;font-size:15.2px;font-weight:bold;line-height:18px;color:#000;white-space:nowrap">Annual Calendar</div>
<svg class="abs" style="left:209px;top:590.4px" width="8" height="12" viewBox="0 0 8 12"><path d="M1 1 L6.5 6 L1 11" fill="none" stroke="#111" stroke-width="1.7"/></svg>
<svg class="abs" style="left:11px;top:637.3px" width="17" height="16" viewBox="0 0 17 16"><rect x="1" y="2.5" width="15" height="11" rx="1" fill="none" stroke="#111" stroke-width="1.5"/><rect x="1" y="2.5" width="15" height="2.5" fill="#111"/><path d="M3.5 7 H13.5 M3.5 9.2 H13.5 M3.5 11.4 H13.5" stroke="#111" stroke-width="1.1"/></svg>
<div class="abs" style="left:36px;top:636.3px;font-size:15.2px;font-weight:bold;line-height:18px;color:#000;white-space:nowrap">Lesson Plan</div>
<svg class="abs" style="left:209px;top:639.3px" width="8" height="12" viewBox="0 0 8 12"><path d="M1 1 L6.5 6 L1 11" fill="none" stroke="#111" stroke-width="1.7"/></svg>
<svg class="abs" style="left:11px;top:686.2px" width="16" height="16" viewBox="0 0 16 16"><rect x="5.5" y="1.5" width="5" height="4" fill="#111"/><rect x="0.5" y="10.5" width="4" height="4" fill="#111"/><rect x="6" y="10.5" width="4" height="4" fill="#111"/><rect x="11.5" y="10.5" width="4" height="4" fill="#111"/><path d="M8 5.5 V10.5 M2.5 10.5 V8 H13.5 V10.5" fill="none" stroke="#111" stroke-width="1.4"/></svg>
<div class="abs" style="left:36px;top:685.2px;font-size:15.2px;font-weight:bold;line-height:18px;color:#000;white-space:nowrap">Human Resource</div>
<svg class="abs" style="left:209px;top:688.2px" width="8" height="12" viewBox="0 0 8 12"><path d="M1 1 L6.5 6 L1 11" fill="none" stroke="#111" stroke-width="1.7"/></svg>
<svg class="abs" style="left:11px;top:735.2px" width="18" height="16" viewBox="0 0 18 16"><path d="M2 6 H6 L14 2 V14 L6 10 H2 Z" fill="none" stroke="#111" stroke-width="1.8" stroke-linejoin="round"/><path d="M4 10 L5 14 H7 L6.5 10" fill="#111"/><rect x="1" y="6" width="5" height="4" fill="#111"/></svg>
<div class="abs" style="left:36px;top:734.2px;font-size:15.2px;font-weight:bold;line-height:18px;color:#000;white-space:nowrap">Communicate</div>
<svg class="abs" style="left:209px;top:737.2px" width="8" height="12" viewBox="0 0 8 12"><path d="M1 1 L6.5 6 L1 11" fill="none" stroke="#111" stroke-width="1.7"/></svg>
<svg class="abs" style="left:11px;top:784.1px" width="16" height="16" viewBox="0 0 16 16"><path d="M8 1 V9" stroke="#111" stroke-width="2.2"/><path d="M3.8 6 L8 10.5 L12.2 6 Z" fill="#111"/><path d="M1 10 V14.5 H15 V10 H12.5 L11 12 H5 L3.5 10 Z" fill="#111"/></svg>
<div class="abs" style="left:36px;top:783.1px;font-size:15.2px;font-weight:bold;line-height:18px;color:#000;white-space:nowrap">Download Center</div>
<svg class="abs" style="left:209px;top:786.1px" width="8" height="12" viewBox="0 0 8 12"><path d="M1 1 L6.5 6 L1 11" fill="none" stroke="#111" stroke-width="1.7"/></svg>
<svg class="abs" style="left:11px;top:833.0px" width="16" height="16" viewBox="0 0 16 16"><path d="M4.5 1.5 H11.5 M6 1.5 V6 L1.5 14.5 H14.5 L10 6 V1.5" fill="none" stroke="#111" stroke-width="1.6" stroke-linejoin="round"/><path d="M4 10 H12 L14 14 H2 Z" fill="#111"/></svg>
<div class="abs" style="left:36px;top:832.0px;font-size:15.2px;font-weight:bold;line-height:18px;color:#000;white-space:nowrap">Homework</div>
<svg class="abs" style="left:209px;top:835.0px" width="8" height="12" viewBox="0 0 8 12"><path d="M1 1 L6.5 6 L1 11" fill="none" stroke="#111" stroke-width="1.7"/></svg>
<svg class="abs" style="left:11px;top:882.0px" width="16" height="16" viewBox="0 0 16 16"><path d="M4 1.5 H15 L12 13 H2.5 Q1 13 1.5 11 Z" fill="#111"/><path d="M2 13 Q1 15 3 15 H13" fill="none" stroke="#111" stroke-width="1.4"/><path d="M6 4.5 H11.5 M5.5 7 H11" stroke="#fff" stroke-width="1"/></svg>
<div class="abs" style="left:36px;top:881.0px;font-size:15.2px;font-weight:bold;line-height:18px;color:#000;white-space:nowrap">Library</div>
<svg class="abs" style="left:209px;top:884.0px" width="8" height="12" viewBox="0 0 8 12"><path d="M1 1 L6.5 6 L1 11" fill="none" stroke="#111" stroke-width="1.7"/></svg>
<div class="abs" style="left:232px;top:280px;width:6px;height:464px;background:#666;border-radius:3px"></div>
</div>
</body></html>
